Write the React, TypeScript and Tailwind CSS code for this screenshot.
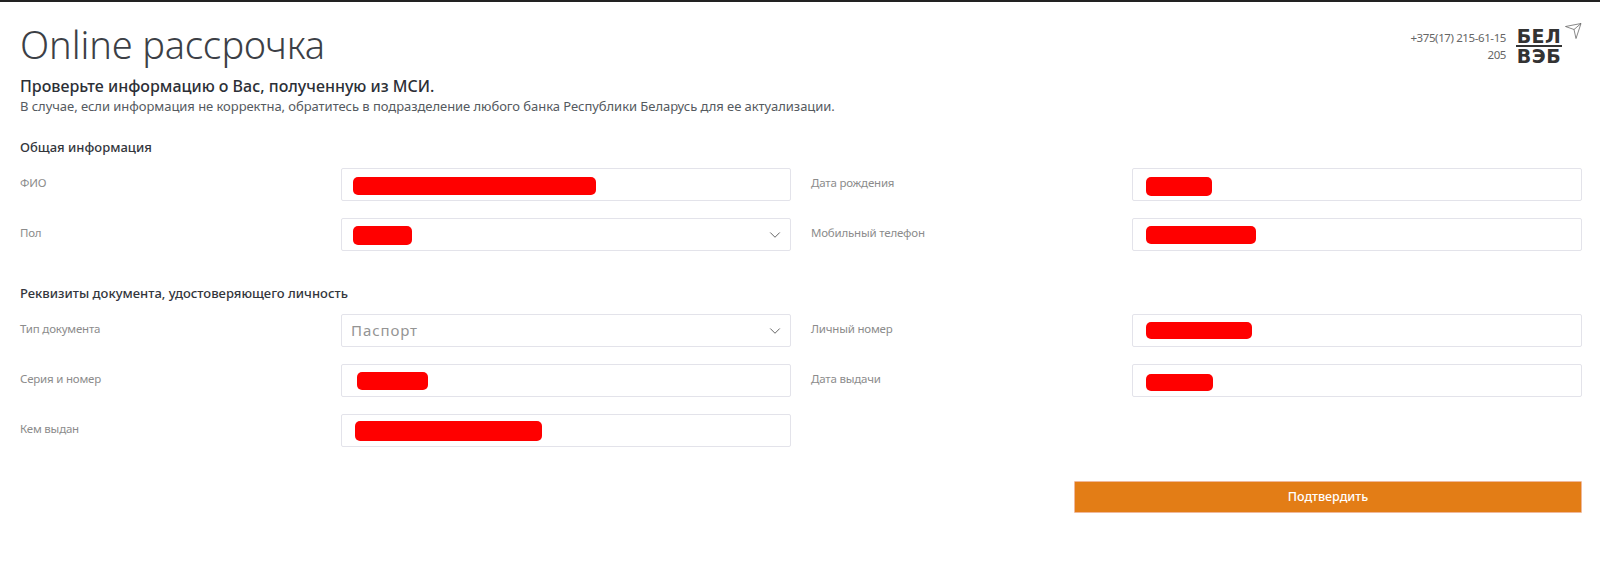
import {ChevronDown} from "lucide-react";

type FieldProps = {
  label: string;
  value?: string;
  blob?: string;
  select?: boolean;
};

function Field({label, value, blob, select}: FieldProps) {
  return (
    <>
      <label className="h-[33px] pt-[6px] text-[11.5px] leading-[18px] text-[#8c8c8c] tracking-[-0.2px]">
        {label}
      </label>
      <div className="h-[33px] flex items-center justify-between border border-[#e3e3ea] rounded-[2px] bg-white">
        {value && (
          <span className="ml-[9px] text-[15px] tracking-[0.9px] text-[#949494]">{value}</span>
        )}
        {blob && <div className={blob} />}
        {select && (
          <ChevronDown
            size={18}
            strokeWidth={1.1}
            className="ml-auto mr-[6px] text-[#444444]"
          />
        )}
      </div>
    </>
  );
}

function Logo() {
  return (
    <div className="flex items-start ml-[10px]">
      <div className="w-[46px] mt-[1px] flex flex-col items-center font-['DejaVu_Sans',sans-serif] font-bold text-[#333333] text-[19px] leading-[16px]">
        <span className="h-[16px] tracking-[0.5px]">БЕЛ</span>
        <div className="w-full h-[2px] bg-[#333333] my-[1px]" />
        <span className="h-[16px] tracking-[0.5px]">ВЭБ</span>
      </div>
      <svg width="17" height="16" viewBox="0 0 17 16" className="ml-[3px] -mt-[4px]" fill="none" stroke="#555555" strokeWidth="0.7">
        <path d="M0.5 3.5 L16 0.5 L11 15.5 L9 6.5 Z M9 6.5 L16 0.5" />
      </svg>
    </div>
  );
}

export default function App() {
  return (
    <div className="w-[1600px] h-[570px] bg-white border-t-2 border-[#222222] font-['Noto_Sans',sans-serif] overflow-hidden">
      <div className="px-[18px] pr-[18px] relative">
        <div className="flex justify-between items-start">
          <h1 className="mt-[15px] ml-[2px] text-[38px] leading-[54px] font-light text-[#3c3f46] tracking-[-0.1px]">
            Online рассрочка
          </h1>
          <div className="flex items-start mt-[24px]">
            <div className="text-[11.5px] leading-[17px] text-[#666666] text-right pt-[3px] tracking-[-0.4px]">
              <div>+375(17) 215-61-15</div>
              <div>205</div>
            </div>
            <div className="mt-[1px]">
              <Logo />
            </div>
          </div>
        </div>

        <div className="pl-[2px]">
          <h2 className="mt-[4px] text-[16px] leading-[22px] font-medium text-[#2c2f36]">
            Проверьте информацию о Вас, полученную из МСИ.
          </h2>
          <p className="text-[13px] leading-[18px] text-[#555a60] tracking-[-0.05px]">
            В случае, если информация не корректна, обратитесь в подразделение любого банка Республики Беларусь для ее актуализации.
          </p>

          <h3 className="mt-[23px] text-[13px] leading-[18px] font-medium text-[#33363c]">
            Общая информация
          </h3>
          <div className="mt-[12px] grid grid-cols-[301px_450px_301px_450px] gap-x-[20px] gap-y-[17px]">
            <Field label="ФИО" blob="ml-[11px] mt-[2px] w-[243px] h-[18px] rounded-[5px] bg-[#ff0000]" />
            <Field label="Дата рождения" blob="ml-[13px] mt-[3px] w-[66px] h-[19px] rounded-[5px] bg-[#ff0000]" />
            <Field label="Пол" select blob="ml-[11px] mt-[2px] w-[59px] h-[19px] rounded-[5px] bg-[#ff0000]" />
            <Field label="Мобильный телефон" blob="ml-[13px] w-[110px] h-[18px] rounded-[5px] bg-[#ff0000]" />
          </div>

          <h3 className="mt-[33px] text-[13px] leading-[18px] font-medium text-[#33363c]">
            Реквизиты документа, удостоверяющего личность
          </h3>
          <div className="mt-[12px] grid grid-cols-[301px_450px_301px_450px] gap-x-[20px] gap-y-[17px]">
            <Field label="Тип документа" value="Паспорт" select />
            <Field label="Личный номер" blob="ml-[13px] w-[106px] h-[17px] rounded-[5px] bg-[#ff0000]" />
            <Field label="Серия и номер" blob="ml-[15px] w-[71px] h-[18px] rounded-[5px] bg-[#ff0000]" />
            <Field label="Дата выдачи" blob="ml-[13px] mt-[3px] w-[67px] h-[17px] rounded-[5px] bg-[#ff0000]" />
            <Field label="Кем выдан" blob="ml-[13px] w-[187px] h-[20px] rounded-[5px] bg-[#ff0000]" />
          </div>

          <div className="flex justify-end mt-[34px]">
            <button className="w-[508px] h-[32px] bg-[#e37d16] border border-[#f0b89a] rounded-[1px] text-white text-[12.5px] font-medium">
              Подтвердить
            </button>
          </div>
        </div>
      </div>
    </div>
  );
}
